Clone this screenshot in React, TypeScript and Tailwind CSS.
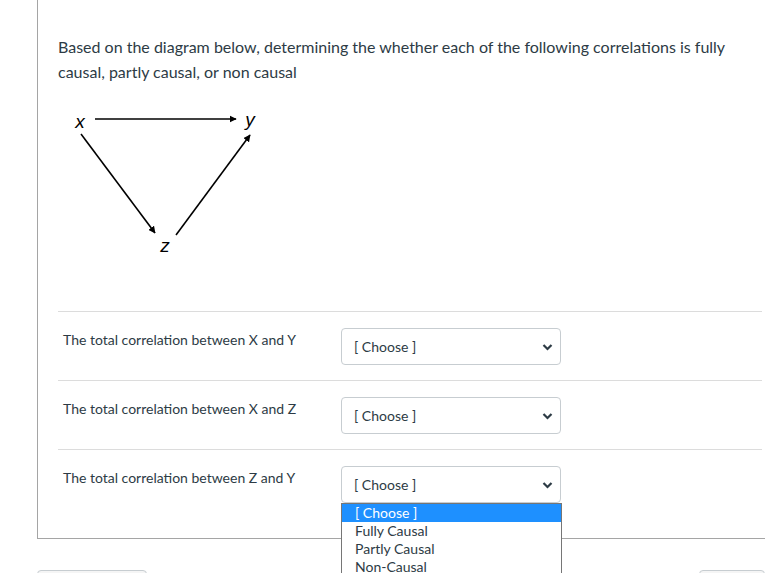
import React from "react";

const rows = ["X and Y", "X and Z", "Z and Y"];
const options = ["[ Choose ]", "Fully Causal", "Partly Causal", "Non-Causal"];

const Chevron = () => (
  <svg width="11" height="8" viewBox="0 0 11 8" className="shrink-0">
    <path d="M1.5 2 L5.5 6 L9.5 2" fill="none" stroke="#2d3b45" strokeWidth="2.2" />
  </svg>
);

const Diagram = () => (
  <svg width="200" height="160" viewBox="0 0 200 160" className="block ml-[2px]">
    <defs>
      <marker id="ah" viewBox="0 0 10 10" refX="9" refY="5" markerWidth="4.5" markerHeight="4.5" orient="auto">
        <path d="M0 0 L10 5 L0 10 z" fill="#000" />
      </marker>
    </defs>
    <g stroke="#000" strokeWidth="1.6">
      <line x1="35" y1="14" x2="176" y2="14" markerEnd="url(#ah)" />
      <line x1="21" y1="29" x2="95" y2="128" markerEnd="url(#ah)" />
      <line x1="116" y1="130" x2="190" y2="30" markerEnd="url(#ah)" />
    </g>
    <g fontFamily="'Liberation Sans', Arial, sans-serif" fontStyle="italic" fontSize="19" fill="#000">
      <text x="20" y="23" textAnchor="middle">x</text>
      <text x="190" y="21" textAnchor="middle">y</text>
      <text x="105" y="147" textAnchor="middle">z</text>
    </g>
  </svg>
);

export default function App() {
  return (
    <div className="w-[765px] h-[573px] overflow-hidden bg-white relative font-['Lato','Noto_Sans',sans-serif] text-[#2d3b45]">
      <div className="ml-[37px] w-[745px] border-l border-b border-[#a5a5a5] pl-5 pr-5 pt-[34px] pb-[20px]">
        <p className="text-[16px] leading-[25px]">
          Based on the diagram below, determining the whether each of the following correlations is fully causal, partly
          causal, or non causal
        </p>
        <div className="mt-[21px] mb-[46px]">
          <Diagram />
        </div>
        {rows.map((r, i) => (
          <div key={r} className="border-t border-[#dcdcdc] flex h-[69px]">
            <div className="w-[283px] pl-[5px] pt-[19px] text-[14px] leading-[18px]">
              The total correlation between {r}
            </div>
            <div className="relative pt-4">
              <div className="w-[220px] h-[37px] border border-[#c7cdd1] rounded-[4px] flex items-center justify-between pl-3 pr-[7px] text-[14px]">
                <span>[ Choose ]</span>
                <Chevron />
              </div>
              {i === 2 && (
                <div className="absolute left-0 top-[53px] w-[221px] bg-white border border-[#767676] z-10 text-[14px] leading-[18px]">
                  {options.map((o, j) => (
                    <div key={o} className={`pl-[13px] h-[18px] ${j === 0 ? "bg-[#1e90ff] text-white" : "text-[#2d3b45]"}`}>
                      {o}
                    </div>
                  ))}
                </div>
              )}
            </div>
          </div>
        ))}
      </div>
      <div className="flex justify-between mt-[31px]">
        <div className="ml-[37px] w-[110px] h-[20px] border border-[#c7cdd1] bg-[#f5f5f5] rounded-t-[4px]" />
        <div className="w-[66px] h-[20px] border border-[#c7cdd1] bg-[#f5f5f5] rounded-t-[4px]" />
      </div>
    </div>
  );
}
